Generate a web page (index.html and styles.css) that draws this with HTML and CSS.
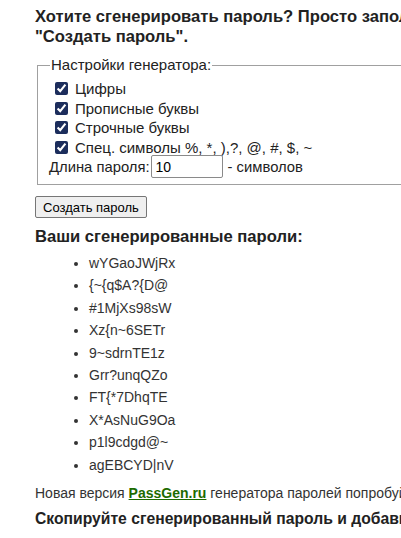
FILE: index.html
```html
<!DOCTYPE html>
<html lang="ru">
<head>
  <meta charset="UTF-8" />
  <meta name="viewport" content="width=device-width, initial-scale=1.0"/>
  <title>Генератор паролей</title>
  <link rel="stylesheet" href="styles.css">
</head>
<body>
  <div class="page">
    <h3 class="intro">Хотите сгенерировать пароль? Просто заполните форму и нажмите кнопку "Создать пароль".</h3>

    <form class="gen-form" onsubmit="return false;">
      <fieldset class="settings">
        <legend>Настройки генератора:</legend>
        <label class="opt"><input type="checkbox" checked> Цифры</label>
        <label class="opt"><input type="checkbox" checked> Прописные буквы</label>
        <label class="opt"><input type="checkbox" checked> Строчные буквы</label>
        <label class="opt"><input type="checkbox" checked> Спец. символы %, *, ),?, @, #, $, ~</label>
        <div class="len-row">Длина пароля:<input class="len-input" type="text" value="10"> - символов</div>
      </fieldset>
      <button class="btn-create" type="button">Создать пароль</button>
    </form>

    <h3 class="result-title">Ваши сгенерированные пароли:</h3>
    <ul class="passwords">
      <li>wYGaoJWjRx</li>
      <li>{~{q$A?{D@</li>
      <li>#1MjXs98sW</li>
      <li>Xz{n~6SETr</li>
      <li>9~sdrnTE1z</li>
      <li>Grr?unqQZo</li>
      <li>FT{*7DhqTE</li>
      <li>X*AsNuG9Oa</li>
      <li>p1l9cdgd@~</li>
      <li>agEBCYD|nV</li>
    </ul>

    <p class="note">Новая версия <a href="#">PassGen.ru</a> генератора паролей попробуйте прямо сейчас.</p>
    <h3 class="copy-title">Скопируйте сгенерированный пароль и добавьте его в надёжное место.</h3>
  </div>
</body>
</html>
```

FILE: styles.css
```css
html, body {
  margin: 0;
  overflow: hidden;
}

body {
  font-family: "Liberation Sans", Arial, sans-serif;
  color: #222;
  background: #fff;
}

.page {
  width: 640px;
  padding: 0 0 0 35px;
}

.intro {
  font-size: 16.6px;
  line-height: 20px;
  font-weight: bold;
  margin: 7px 0 10px;
}

.settings {
  margin: 0 0 0 2px;
  padding: 6px 12px 6px 12px;
  border: 1px solid #a0a0a0;
  border-width: 1px 0 1px 1px;
  font-size: 15px;
}

.settings legend {
  padding: 0 1px;
  line-height: 16px;
}

.opt {
  display: flex;
  align-items: center;
  height: 19.5px;
  padding-left: 2px;
}

.opt input {
  width: 13px;
  height: 13px;
  margin: 0 7px 0 3px;
  accent-color: #1c2d5c;
}

.len-row {
  display: flex;
  align-items: center;
  height: 23px;
  margin: -2px 0 0 -1px;
  font-size: 14.8px;
}

.len-input {
  width: 62px;
  height: 19px;
  margin: 0 5px 0 1px;
  padding: 1px 4px;
  border: 1px solid #8a8a8a;
  border-radius: 2px;
  font: 14px "Liberation Sans", Arial, sans-serif;
  color: #000;
}

.btn-create {
  margin: 11px 0 0 0;
  height: 22px;
  padding: 0 7px;
  font: 13px "Liberation Sans", Arial, sans-serif;
  color: #000;
  background: #efefef;
  border: 1px solid #767676;
  border-radius: 2px;
}

.result-title {
  font-size: 16.6px;
  line-height: 20px;
  font-weight: bold;
  margin: 9px 0 5px;
}

.passwords {
  margin: 0;
  padding-left: 54px;
  font-size: 14px;
  color: #333;
}

.passwords li {
  line-height: 22.4px;
}

.note {
  font-size: 14px;
  color: #333;
  margin: 7px 0 0;
  line-height: 20px;
}

.note a {
  color: #1d6b00;
  font-weight: bold;
}

.copy-title {
  font-size: 15.7px;
  line-height: 20px;
  font-weight: bold;
  margin: 6px 0 0;
}
```
